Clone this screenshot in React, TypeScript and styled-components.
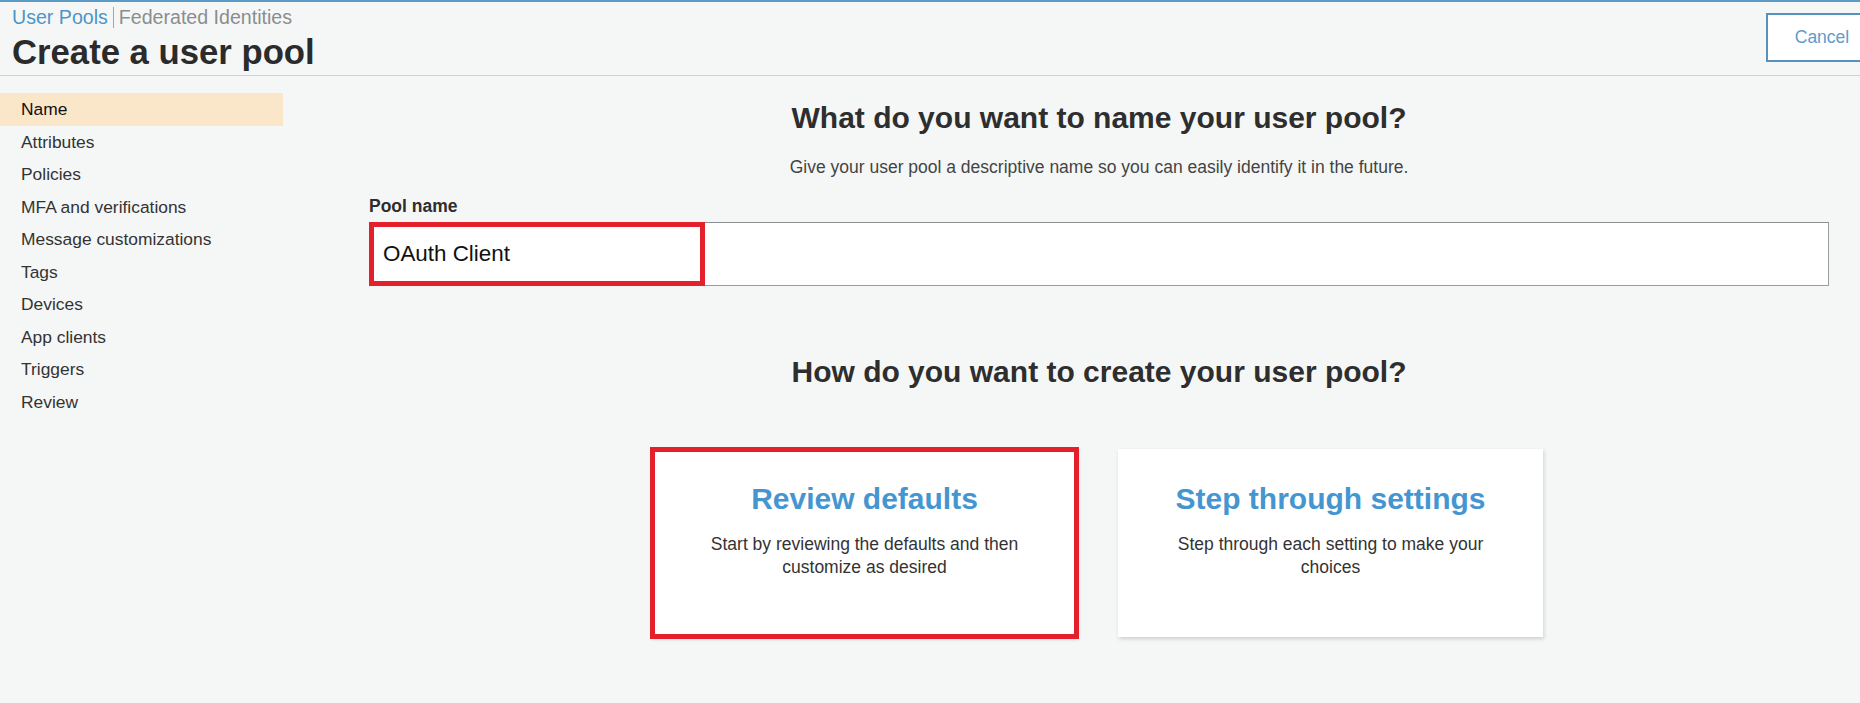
import React from "react";
import styled, { createGlobalStyle } from "styled-components";

const GlobalStyle = createGlobalStyle`
  html, body {
    margin: 0;
    padding: 0;
    background: #f5f7f7;
    overflow: hidden;
  }
  body {
    font-family: "Liberation Sans", Arial, Helvetica, sans-serif;
    color: #333;
  }
  * { box-sizing: border-box; }
`;

const Page = styled.div`
  min-height: 703px;
  border-top: 2px solid #5b9bc6;
  background: #f5f7f7;
`;

const Header = styled.header`
  display: flex;
  justify-content: space-between;
  align-items: flex-start;
  padding: 3px 0 3px 12px;
  border-bottom: 1px solid #cfd2d3;
`;

const TitleBlock = styled.div`
  display: flex;
  flex-direction: column;
`;

const Breadcrumb = styled.nav`
  display: flex;
  align-items: center;
  font-size: 19.6px;
  line-height: 24px;
  height: 24px;
`;

const Crumb = styled.a<{ $active?: boolean }>`
  color: ${(p) => (p.$active ? "#4d94c9" : "#8a8d8f")};
  text-decoration: none;
  cursor: pointer;
`;

const CrumbSep = styled.span`
  display: inline-block;
  width: 1px;
  height: 21px;
  background: #a3a6a8;
  margin: 0 5px 0 5px;
`;

const PageTitle = styled.h1`
  margin: 3px 0 0 0;
  font-size: 34.7px;
  line-height: 40px;
  font-weight: 700;
  color: #2b2b2b;
`;

const CancelButton = styled.button`
  margin-top: 8px;
  margin-right: -18px;
  width: 112px;
  height: 49px;
  background: #ffffff;
  border: 2px solid #5593be;
  color: #5d9dcb;
  font-family: inherit;
  font-size: 17.5px;
  padding: 0;
  cursor: pointer;
`;

const Body = styled.div`
  display: flex;
  align-items: flex-start;
`;

const Sidebar = styled.ul`
  list-style: none;
  margin: 0;
  padding: 17px 0 0 0;
  width: 283px;
  flex-shrink: 0;
`;

const SideItem = styled.li<{ $active?: boolean }>`
  height: 32.5px;
  line-height: 32.5px;
  padding-left: 21px;
  font-size: 17.4px;
  color: ${(p) => (p.$active ? "#111" : "#333")};
  background: ${(p) => (p.$active ? "#fae6c9" : "transparent")};
  white-space: nowrap;
`;

const Main = styled.main`
  flex: 1;
  padding: 0 31px 0 86px;
  display: flex;
  flex-direction: column;
`;

const SectionHeading = styled.h2<{ $gap: number }>`
  margin: ${(p) => p.$gap}px 0 0 0;
  font-size: 30px;
  line-height: 36px;
  font-weight: 700;
  color: #2e2e2e;
  text-align: center;
`;

const Lead = styled.p`
  margin: 20px 0 0 0;
  font-size: 17.5px;
  line-height: 22px;
  color: #444;
  text-align: center;
`;

const FieldLabel = styled.label`
  margin-top: 17px;
  font-size: 17.5px;
  line-height: 22px;
  font-weight: 700;
  color: #2e2e2e;
`;

const InputBox = styled.div`
  margin-top: 5px;
  height: 64px;
  background: #ffffff;
  border: 1px solid #9a9d9e;
  border-top-color: #8c8f90;
  display: flex;
`;

const InputValue = styled.span`
  margin: -1px 0 -1px -1px;
  width: 336px;
  border: 5px solid #e3202b;
  padding-left: 9px;
  display: flex;
  align-items: center;
  font-size: 22.4px;
  color: #111;
`;

const CardRow = styled.div`
  margin-top: 59px;
  display: flex;
  justify-content: center;
  gap: 41px;
  padding-right: 3px;
`;

const Card = styled.button<{ $highlight?: boolean }>`
  width: 425px;
  height: 188px;
  background: #ffffff;
  border: none;
  padding: 32px 50px 0 50px;
  display: flex;
  flex-direction: column;
  align-items: center;
  font-family: inherit;
  cursor: pointer;
  box-shadow: 1px 2px 4px rgba(0, 0, 0, 0.16);
  outline: ${(p) => (p.$highlight ? "5px solid #e3202b" : "none")};
  outline-offset: -3px;
`;

const CardTitle = styled.span`
  font-size: 30px;
  line-height: 36px;
  font-weight: 700;
  color: #4596d0;
  white-space: nowrap;
`;

const CardText = styled.span`
  margin-top: 16px;
  font-size: 17.5px;
  line-height: 23px;
  color: #333;
  text-align: center;
`;

const steps = [
  "Name",
  "Attributes",
  "Policies",
  "MFA and verifications",
  "Message customizations",
  "Tags",
  "Devices",
  "App clients",
  "Triggers",
  "Review",
];

export default function App() {
  return (
    <>
      <GlobalStyle />
      <Page>
        <Header>
          <TitleBlock>
            <Breadcrumb>
              <Crumb $active>User Pools</Crumb>
              <CrumbSep />
              <Crumb>Federated Identities</Crumb>
            </Breadcrumb>
            <PageTitle>Create a user pool</PageTitle>
          </TitleBlock>
          <CancelButton>Cancel</CancelButton>
        </Header>
        <Body>
          <Sidebar>
            {steps.map((s, i) => (
              <SideItem key={s} $active={i === 0}>
                {s}
              </SideItem>
            ))}
          </Sidebar>
          <Main>
            <SectionHeading $gap={24}>What do you want to name your user pool?</SectionHeading>
            <Lead>Give your user pool a descriptive name so you can easily identify it in the future.</Lead>
            <FieldLabel>Pool name</FieldLabel>
            <InputBox>
              <InputValue>OAuth Client</InputValue>
            </InputBox>
            <SectionHeading $gap={68}>How do you want to create your user pool?</SectionHeading>
            <CardRow>
              <Card $highlight>
                <CardTitle>Review defaults</CardTitle>
                <CardText>Start by reviewing the defaults and then customize as desired</CardText>
              </Card>
              <Card>
                <CardTitle>Step through settings</CardTitle>
                <CardText>Step through each setting to make your choices</CardText>
              </Card>
            </CardRow>
          </Main>
        </Body>
      </Page>
    </>
  );
}
